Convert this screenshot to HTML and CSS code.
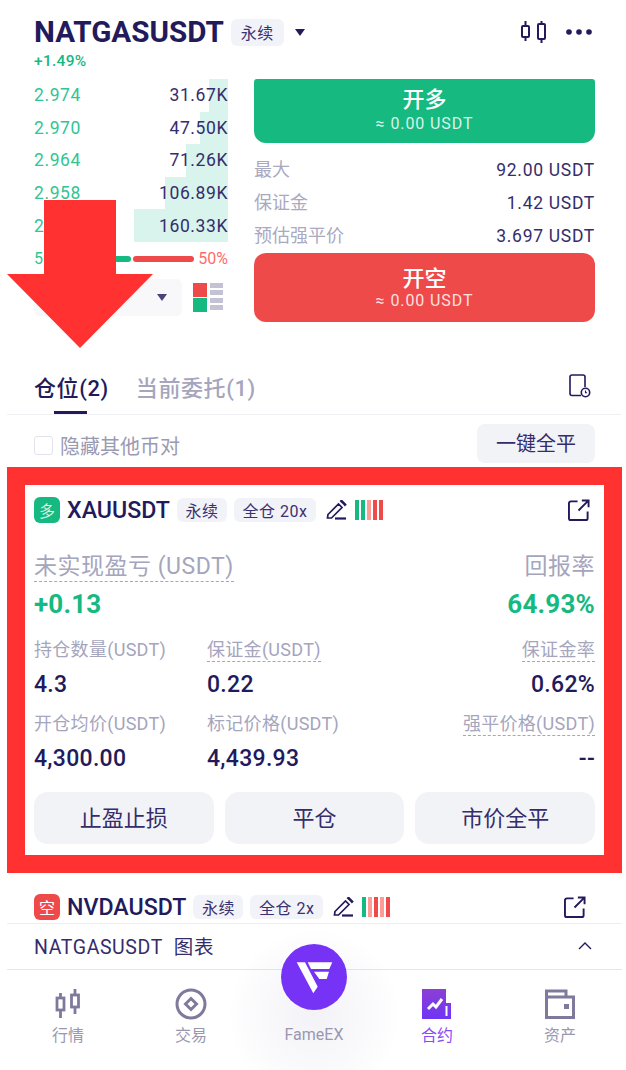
FILE: index.html
```html
<!DOCTYPE html>
<html lang="zh-CN">
<head>
    <meta charset="UTF-8">
    <meta name="viewport" content="width=device-width, initial-scale=1.0">
    <title>NATGASUSDT 永续</title>
    <link rel="stylesheet" href="styles.css">
</head>
<body>
    <header class="header">
        <h1 class="symbol">NATGASUSDT</h1>
        <span class="tag tag-head">永续</span>
        <span class="caret caret-dark"></span>
        <div class="header-icons">
            <svg width="25" height="22" viewBox="0 0 25 22" fill="none" stroke="#231a5c" stroke-width="2"><rect x="1" y="5" width="7" height="11" rx="1"/><path d="M4.500 0v5M4.500 16v4"/><rect x="17" y="3" width="7" height="15" rx="1"/><path d="M20.500 0v3M20.500 18v4"/></svg>
            <svg width="26" height="6" viewBox="0 0 26 6" fill="#231a5c"><circle cx="3" cy="3" r="2.800"/><circle cx="13" cy="3" r="2.800"/><circle cx="23" cy="3" r="2.800"/></svg>
        </div>
    </header>
    <div class="change">+1.49%</div>

    <section class="trade">
        <div class="book">
            <div class="book-row"><span class="depth depth-1"></span><span class="price">2.974</span><span class="amount">31.67K</span></div>
            <div class="book-row"><span class="depth depth-2"></span><span class="price">2.970</span><span class="amount">47.50K</span></div>
            <div class="book-row"><span class="depth depth-3"></span><span class="price">2.964</span><span class="amount">71.26K</span></div>
            <div class="book-row"><span class="depth depth-4"></span><span class="price">2.958</span><span class="amount">106.89K</span></div>
            <div class="book-row"><span class="depth depth-5"></span><span class="price">2.952</span><span class="amount">160.33K</span></div>
            <div class="ratio">
                <span class="ratio-buy-label">50%</span>
                <span class="ratio-bar ratio-green"></span>
                <span class="ratio-bar ratio-red"></span>
                <span class="ratio-sell-label">50%</span>
            </div>
            <div class="book-tools">
                <div class="depth-select"><span class="caret caret-mid"></span></div>
                <div class="book-layout">
                    <span class="sq sq-red"></span><span class="lines"></span>
                    <span class="sq sq-green"></span><span class="lines"></span>
                </div>
            </div>
        </div>
        <div class="order">
            <button class="order-btn btn-long"><span class="btn-main">开多</span><span class="btn-sub">≈ 0.00 USDT</span></button>
            <div class="info-row info-first"><span class="info-label">最大</span><span class="info-val">92.00 USDT</span></div>
            <div class="info-row"><span class="info-label">保证金</span><span class="info-val">1.42 USDT</span></div>
            <div class="info-row"><span class="info-label">预估强平价</span><span class="info-val">3.697 USDT</span></div>
            <button class="order-btn btn-short"><span class="btn-main">开空</span><span class="btn-sub">≈ 0.00 USDT</span></button>
        </div>
    </section>

    <nav class="tabs">
        <span class="tab tab-active">仓位(2)</span>
        <span class="tab">当前委托(1)</span>
        <svg class="tab-icon" width="22" height="24" viewBox="0 0 22 24" fill="none" stroke="#231a5c" stroke-width="1.600"><path d="M12 21.500H3a2 2 0 0 1-2-2V3a2 2 0 0 1 2-2h11a2 2 0 0 1 2 2v10"/><circle cx="16.500" cy="18.500" r="4.200"/><path d="M16.500 16.500v2.200h1.600" stroke-width="1.100"/></svg>
    </nav>

    <div class="filter">
        <label class="hide-other"><span class="checkbox"></span>隐藏其他币对</label>
        <button class="close-all">一键全平</button>
    </div>

    <section class="frame">
        <div class="pos-head">
            <span class="side side-long">多</span>
            <span class="pos-name">XAUUSDT</span>
            <span class="tag">永续</span>
            <span class="tag">全仓 20x</span>
            <svg class="pencil" width="21" height="20" viewBox="0 0 21 20" fill="none" stroke="#231a5c" stroke-width="1.700"><path d="M2 14.500 12.500 4l3.500 3.500L5.500 18H1.500z"/><path d="M14.500 2l1-1 3.500 3.500-1 1" stroke-width="2.500"/><path d="M9 18.500h11" stroke-width="2.200"/></svg>
            <span class="risk"><i class="g"></i><i class="g"></i><i class="lr"></i><i class="r"></i><i class="r"></i></span>
            <svg class="share" width="22" height="22" viewBox="0 0 23 23" fill="none" stroke="#231a5c" stroke-width="2"><path d="M10 2.500H3a2 2 0 0 0-2 2V20a2 2 0 0 0 2 2h15.500a2 2 0 0 0 2-2v-7"/><path d="M11 12 21 2M14.500 1.500h7v7"/></svg>
        </div>

        <div class="pnl">
            <div><span class="pnl-label dashed">未实现盈亏 (USDT)</span><div class="pnl-val">+0.13</div></div>
            <div class="right"><span class="pnl-label">回报率</span><div class="pnl-val">64.93%</div></div>
        </div>

        <div class="stats">
            <div><span class="stat-label">持仓数量(USDT)</span><div class="stat-val">4.3</div></div>
            <div><span class="stat-label dashed">保证金(USDT)</span><div class="stat-val">0.22</div></div>
            <div class="right"><span class="stat-label dashed">保证金率</span><div class="stat-val">0.62%</div></div>
            <div><span class="stat-label">开仓均价(USDT)</span><div class="stat-val">4,300.00</div></div>
            <div><span class="stat-label">标记价格(USDT)</span><div class="stat-val">4,439.93</div></div>
            <div class="right"><span class="stat-label dashed">强平价格(USDT)</span><div class="stat-val">--</div></div>
        </div>

        <div class="pos-actions">
            <button class="pos-btn">止盈止损</button>
            <button class="pos-btn">平仓</button>
            <button class="pos-btn">市价全平</button>
        </div>
    </section>

    <section class="next-pos">
        <div class="pos-head pos-head-next">
            <span class="side side-short">空</span>
            <span class="pos-name">NVDAUSDT</span>
            <span class="tag">永续</span>
            <span class="tag">全仓 2x</span>
            <svg class="pencil" width="21" height="20" viewBox="0 0 21 20" fill="none" stroke="#231a5c" stroke-width="1.700"><path d="M2 14.500 12.500 4l3.500 3.500L5.500 18H1.500z"/><path d="M14.500 2l1-1 3.500 3.500-1 1" stroke-width="2.500"/><path d="M9 18.500h11" stroke-width="2.200"/></svg>
            <span class="risk"><i class="g"></i><i class="lr"></i><i class="r"></i><i class="lr"></i><i class="r"></i></span>
            <svg class="share" width="22" height="22" viewBox="0 0 23 23" fill="none" stroke="#231a5c" stroke-width="2"><path d="M10 2.500H3a2 2 0 0 0-2 2V20a2 2 0 0 0 2 2h15.500a2 2 0 0 0 2-2v-7"/><path d="M11 12 21 2M14.500 1.500h7v7"/></svg>
        </div>
    </section>

    <div class="chart-bar">
        <span>NATGASUSDT&nbsp; 图表</span>
        <svg width="14" height="8" viewBox="0 0 14 8" fill="none" stroke="#231a5c" stroke-width="1.400"><path d="M1 7l6-6 6 6"/></svg>
    </div>

    <footer class="nav">
        <div class="nav-item">
            <svg class="nav-icon" width="26" height="30" viewBox="0 0 26 30" fill="none" stroke="#7f7a9c" stroke-width="2.800"><rect x="2" y="9" width="7" height="12"/><path d="M5.500 4v5M5.500 21v8"/><rect x="16.500" y="6" width="7" height="12"/><path d="M20 0v6M20 18v7"/></svg>
            <span>行情</span>
        </div>
        <div class="nav-item">
            <svg class="nav-icon" width="32" height="32" viewBox="0 0 32 32" fill="none" stroke="#7f7a9c"><circle cx="16" cy="16" r="14" stroke-width="3"/><path d="M16 10.500 21.500 16 16 21.500 10.500 16z" stroke-width="3"/></svg>
            <span>交易</span>
        </div>
        <div class="nav-item nav-logo-item">
            <span class="logo-glow"></span>
            <svg class="logo" width="66" height="66" viewBox="0 0 66 66"><circle cx="33" cy="33" r="33" fill="#7733f5"/><path fill="#fff" d="M15.700 18.300H24L36.700 42.700 32.300 49.300zM26.700 18.300H51.300L48.300 25H30zM33 27.700H48L45.700 35H38.300z"/></svg>
            <span class="logo-label">FameEX</span>
        </div>
        <div class="nav-item nav-active">
            <svg class="nav-icon" width="30" height="30" viewBox="0 0 30 30">
                <defs><linearGradient id="contractFill" x1="0" y1="0" x2="0" y2="1"><stop offset="0" stop-color="#8c3fd6"/><stop offset="1" stop-color="#6f34f5"/></linearGradient></defs>
                <path fill="url(#contractFill)" d="M0 0H24V14H29V30H0z"/>
                <path fill="none" stroke="#fff" stroke-width="3" d="M6 20l5-5 3 3 6-8"/>
                <path stroke="#fff" stroke-width="2" d="M24.500 17v10"/>
            </svg>
            <span>合约</span>
        </div>
        <div class="nav-item">
            <svg class="nav-icon" width="30" height="30" viewBox="0 0 30 30" fill="none" stroke="#7f7a9c" stroke-width="3"><path d="M1.500 8V28.500H28.500V8H1.500zM1.500 8V2H21V8"/><rect x="19" y="15" width="5" height="5" fill="#7f7a9c" stroke="none"/></svg>
            <span>资产</span>
        </div>
    </footer>

    <svg class="arrow" width="146" height="148" viewBox="0 0 146 148"><path fill="#ff3131" d="M37 0H109V74H146L73 148 0 74H37z"/></svg>
</body>
</html>
```

FILE: styles.css
```css
* {
    margin: 0;
    padding: 0;
    box-sizing: border-box;
}

body {
    font-family: Roboto, "Noto Sans CJK SC", sans-serif;
    background: white;
    color: #231a5c;
    width: 626px;
    height: 1070px;
    overflow: hidden;
    position: relative;
}

button {
    font-family: inherit;
    border: none;
    cursor: pointer;
}

.header {
    display: flex;
    align-items: center;
    height: 36px;
    margin-top: 14px;
    padding: 0 34px 0 34px;
}

.symbol {
    font-size: 29.6px;
    font-weight: 700;
    color: #231a5c;
    line-height: 36px;
}

.tag {
    display: inline-flex;
    align-items: center;
    height: 24px;
    padding: 0 8.5px;
    background: #f2f3f8;
    border-radius: 6px;
    font-size: 16px;
    letter-spacing: 0.5px;
    color: #3a3270;
    white-space: nowrap;
}

.tag-head {
    margin-left: 7px;
    height: 27px;
    padding: 0 10px;
    font-size: 16px;
}

.caret {
    display: inline-block;
    width: 0;
    height: 0;
    border-left: 5px solid transparent;
    border-right: 5px solid transparent;
}

.caret-dark {
    border-top: 7px solid #231a5c;
    margin-left: 11px;
}

.caret-mid {
    border-top: 7px solid #4a4278;
}

.header-icons {
    margin-left: auto;
    display: flex;
    align-items: center;
    gap: 20px;
}

.change {
    height: 22px;
    margin-bottom: 7px;
    padding-left: 34px;
    font-size: 15.5px;
    font-weight: 500;
    line-height: 22px;
    letter-spacing: 0.3px;
    color: #16b97f;
}

.trade {
    display: grid;
    grid-template-columns: 194px 341px;
    column-gap: 26px;
    padding-left: 34px;
}

.book-row {
    position: relative;
    display: flex;
    justify-content: space-between;
    align-items: center;
    height: 32.6px;
    font-size: 17.5px;
    letter-spacing: 0.6px;
}

.book-row span {
    position: relative;
}

.book-row .depth {
    position: absolute;
    right: 0;
    top: 0;
    bottom: 0;
    background: #d8f4ec;
}

.depth-1 { width: 19px; }
.depth-2 { width: 28px; }
.depth-3 { width: 42px; }
.depth-4 { width: 63px; }
.depth-5 { width: 94px; }

.price {
    color: #2fc594;
}

.amount {
    color: #352d6b;
}

.ratio {
    display: flex;
    align-items: center;
    height: 18px;
    margin-top: 8px;
    font-size: 16px;
}

.ratio-buy-label {
    color: #2fc594;
    width: 50px;
}

.ratio-bar {
    height: 6px;
    border-radius: 3px;
}

.ratio-green {
    width: 47px;
    background: #16b97f;
    margin-right: 2px;
}

.ratio-red {
    width: 61px;
    background: #ef4a4a;
}

.ratio-sell-label {
    margin-left: auto;
    color: #ff6b6b;
}

.book-tools {
    display: flex;
    justify-content: space-between;
    align-items: center;
    margin-top: 11px;
}

.depth-select {
    width: 148px;
    height: 37px;
    background: #f8f8fa;
    border-radius: 6px;
    display: flex;
    align-items: center;
    justify-content: flex-end;
    padding-right: 15px;
}

.book-layout {
    display: grid;
    grid-template-columns: 14px 13px;
    grid-auto-rows: 14px;
    gap: 1px 3px;
    margin-right: 5px;
}

.sq-red { background: #ef4a4a; }
.sq-green { background: #16b97f; }

.lines {
    background: repeating-linear-gradient(#c4c3d6 0 5px, white 5px 7px);
}

.order-btn {
    display: flex;
    flex-direction: column;
    align-items: center;
    justify-content: center;
    width: 100%;
    color: white;
}

.btn-long {
    height: 64px;
    padding-bottom: 3px;
    background: #16b97f;
    border-radius: 3px 3px 12px 12px;
}

.btn-long .btn-sub {
    margin-top: 2px;
}

.btn-short {
    height: 69px;
    margin-top: 1px;
    background: #ef4a4a;
    border-radius: 12px;
}

.btn-main {
    font-size: 22px;
    line-height: 27px;
    font-weight: 500;
}

.btn-sub {
    font-size: 16px;
    line-height: 18px;
    color: rgba(255,255,255,0.85);
    letter-spacing: 0.9px;
}

.info-row {
    display: flex;
    justify-content: space-between;
    align-items: center;
    height: 33px;
    font-size: 18px;
    color: #a9a9c0;
}

.info-first {
    margin-top: 10px;
}

.info-label {
    padding-bottom: 3px;
}

.info-val {
    font-size: 17.5px;
    letter-spacing: 0.7px;
    color: #352d6b;
}

.tabs {
    position: relative;
    display: flex;
    align-items: center;
    gap: 27px;
    height: 55px;
    margin: 38px 5px 0 7px;
    padding: 0 30px 3px 27px;
    border-bottom: 1px solid #f0f0f4;
}

.tab {
    font-size: 22px;
    font-weight: 500;
    letter-spacing: 0.6px;
    color: #a5a5bd;
}

.tab-active {
    position: relative;
    color: #231a5c;
}

/* short bar under the active tab */
.tab-active::after {
    content: "";
    position: absolute;
    left: 20px;
    bottom: -12px;
    width: 33px;
    height: 3px;
    background: #231a5c;
}

.tab-icon {
    margin-left: auto;
}

.filter {
    display: flex;
    justify-content: space-between;
    align-items: flex-start;
    height: 52px;
    padding: 9px 31px 0 34px;
}

.hide-other {
    display: flex;
    align-items: center;
    gap: 7px;
    height: 39px;
    padding-top: 4px;
    font-size: 20px;
    color: #9a9ab0;
}

.checkbox {
    width: 19px;
    height: 19px;
    border: 1.5px solid #e2e2ec;
    border-radius: 3px;
}

.close-all {
    width: 118px;
    height: 39px;
    padding-bottom: 2px;
    background: #f2f3f7;
    border-radius: 8px;
    font-size: 20px;
    color: #352d6b;
}

.frame {
    width: 615px;
    height: 406px;
    margin-left: 7px;
    padding: 12px 9px 11px;
    border: 18px solid #ff3131;
}

.pos-head {
    display: flex;
    align-items: center;
    gap: 7px;
    height: 26px;
}

.side {
    display: flex;
    align-items: center;
    justify-content: center;
    width: 26px;
    height: 26px;
    border-radius: 6px;
    color: white;
    font-size: 16px;
}

.side-long { background: #16b97f; color: rgba(255,255,255,0.85); }
.side-short { background: #ef4a4a; }

.pos-name {
    font-size: 23.2px;
    font-weight: 500;
    color: #231a5c;
}

.pencil {
    margin-left: 3px;
}

.risk {
    display: flex;
    gap: 1.5px;
    margin-left: 1px;
}

.risk i {
    display: block;
    width: 4.5px;
    height: 20px;
}

.risk .g { background: #16b97f; }
.risk .r { background: #ef4a4a; }
.risk .lr { background: #ff9c96; }

.share {
    margin-left: auto;
    margin-right: 5px;
}

.pnl {
    display: flex;
    justify-content: space-between;
    margin-top: 30px;
}

.right {
    text-align: right;
}

.dashed {
    border-bottom: 1px dashed #a5a5bd;
}

.pnl-label {
    display: inline-block;
    height: 29px;
    font-size: 23px;
    line-height: 28px;
    letter-spacing: 0.5px;
    color: #a5a5bd;
}

.pnl-val {
    margin-top: 8px;
    font-size: 26px;
    line-height: 28px;
    font-weight: 700;
    letter-spacing: 0.2px;
    color: #16b97f;
}

.stats {
    display: grid;
    grid-template-columns: 173px 1fr auto;
    row-gap: 13px;
    margin-top: 20px;
}

.stat-label {
    display: inline-block;
    height: 24px;
    font-size: 18px;
    line-height: 23px;
    letter-spacing: 0.3px;
    color: #a5a5bd;
}

.stat-val {
    margin-top: 9px;
    font-size: 23px;
    line-height: 28px;
    font-weight: 500;
    letter-spacing: 0.3px;
    color: #231a5c;
}

.pos-actions {
    display: grid;
    grid-template-columns: repeat(3, 1fr);
    gap: 11px;
    margin-top: 19px;
}

.pos-btn {
    height: 52px;
    padding-bottom: 4px;
    background: #f2f3f7;
    border-radius: 14px;
    font-size: 22px;
    color: #352d6b;
}

.next-pos {
    height: 51px;
    margin: 0 4px 0 7px;
    padding: 20px 31px 0 27px;
    border-bottom: 1px solid #ededf2;
}

.pos-head-next {
    height: 27px;
}

.chart-bar {
    display: flex;
    justify-content: space-between;
    align-items: center;
    height: 46px;
    margin: 0 4px 0 7px;
    padding: 0 30px 2px 27px;
    border-bottom: 1px solid #e6e6ec;
    font-size: 19.5px;
    letter-spacing: 0.6px;
    color: #352d6b;
}

.nav {
    display: grid;
    grid-template-columns: repeat(5, 123px);
    justify-content: center;
    height: 100px;
    padding: 18px 0 0 2px;
    font-size: 16px;
    color: #9a98b0;
    text-align: center;
}

.nav-item {
    position: relative;
    display: flex;
    flex-direction: column;
    align-items: center;
}

.nav-icon {
    height: 32px;
    margin-bottom: 2px;
}

.nav-active {
    color: #8a4cf5;
}

/* round logo sticks up over the bar above it */
.logo-glow {
    position: absolute;
    left: -24px;
    top: -58px;
    width: 170px;
    height: 170px;
    border-radius: 50%;
    background: radial-gradient(circle, rgba(120,115,170,0.09) 0%, rgba(120,115,170,0.04) 45%, rgba(120,115,170,0) 72%);
}

.logo {
    position: absolute;
    left: 28px;
    top: -44px;
}

.logo-label {
    position: relative;
    margin-top: 37px;
}

.arrow {
    position: absolute;
    left: 7px;
    top: 200px;
}
```
